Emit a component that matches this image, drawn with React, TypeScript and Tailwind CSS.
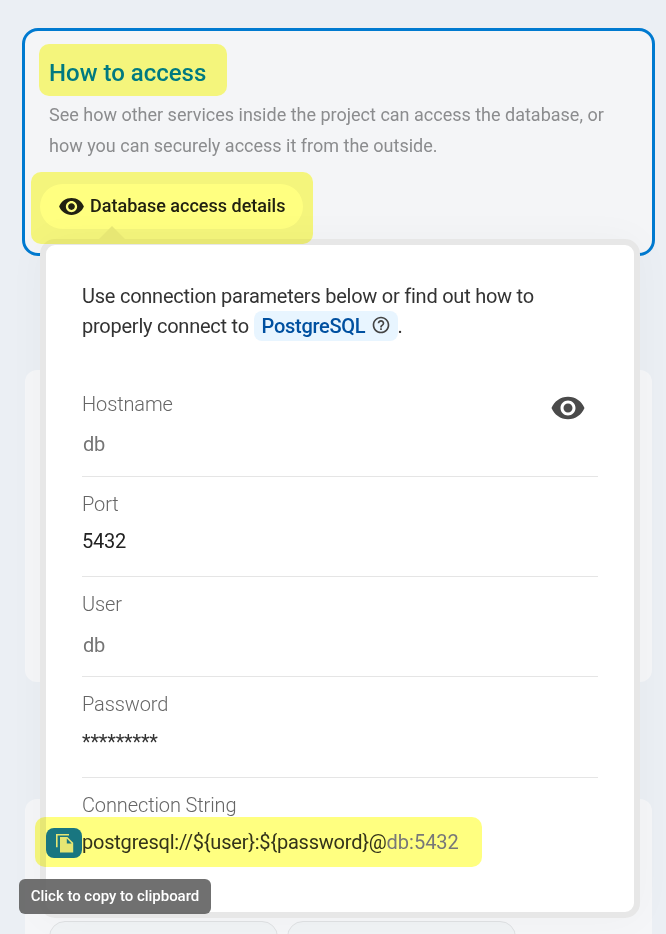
import type { ReactNode } from 'react';
import { MdVisibility, MdHelpOutline } from 'react-icons/md';

type FieldProps = {
  label: string;
  value: ReactNode;
  className: string;
  valueClass: string;
};

function Field({ label, value, className, valueClass }: FieldProps) {
  return (
    <div className={`box-border flex flex-col whitespace-nowrap border-b border-[#e5e5e5] ${className}`}>
      <div className="h-[30px] text-[20px] leading-[30px] tracking-[-0.12px] font-light text-[#666]">{label}</div>
      <div className={`h-[30px] text-[20px] leading-[30px] ${valueClass}`}>{value}</div>
    </div>
  );
}

function CopyIcon() {
  return (
    <svg viewBox="0 0 18 19" className="h-[19px] w-[18px]" fill="#e6e6e6">
      <path d="M0 13.3V0h13v1.6H1.6v11.7z" />
      <path fillRule="evenodd" d="M4 3h7.4L17.2 8.8v9.8H4zM10.8 4.4v5h4.9z" />
    </svg>
  );
}

function AccessCard() {
  return (
    <section className="h-[228px] w-[633px] rounded-[16px] border-[3px] border-[#007ad0] bg-[#f4f5f7] pl-6 pt-[26px]">
      <h2 className="h-[32px] whitespace-nowrap text-[24px] font-medium leading-[32px] text-[#007aff]">How to access</h2>
      <p className="mt-[10px] whitespace-nowrap text-[18px] leading-[31px] text-[#8b8c8e]">
        See how other services inside the project can access the database, or
        <br />
        how you can securely access it from the outside.
      </p>
      <button className="-ml-[9px] mt-[23px] flex h-[45px] w-[263px] items-center gap-[5px] rounded-full bg-white pl-[18px] text-[18px] font-medium text-[#212121]">
        <MdVisibility className="size-[27px] shrink-0" />
        <span className="whitespace-nowrap pb-[2px]">Database access details</span>
      </button>
    </section>
  );
}

function ConnectionPopup() {
  return (
    <div className="absolute left-[40px] top-[239px] h-[679px] w-[600px] rounded-[15px] border-[6px] border-[#e7e7e7] bg-white px-9 pt-9 shadow-[0_0_40px_rgba(0,0,0,0.03)]">
      <div className="absolute -top-[19px] left-[53px] border-x-[13px] border-b-[13px] border-x-transparent border-b-[#e7e7e7]" />
      <p className="h-[92px] whitespace-nowrap text-[20px] leading-[30px] tracking-[-0.24px] text-[#333]">
        Use connection parameters below or find out how to
        <br />
        properly connect to{' '}
        <span className="inline-flex h-[30px] w-[144px] items-center gap-[6px] rounded-lg bg-[#e8f5ff] pl-2 align-top font-medium tracking-[-0.28px] text-[#0050a0]">
          PostgreSQL
          <MdHelpOutline className="mb-[2px] size-[20px] text-[#444]" />
        </span>
        .
      </p>
      <div className="relative mt-[16px]">
        <MdVisibility className="absolute right-[12px] top-px size-[36px] text-[#4a4a4a]" />
        <Field label="Hostname" value="db" className="h-[88px] gap-[10px]" valueClass="pl-px tracking-[-0.3px] text-[#757575]" />
        <Field label="Port" value="5432" className="h-[100px] gap-[7px] pt-3" valueClass="tracking-[-0.2px] text-[#222]" />
        <Field label="User" value="db" className="h-[100px] gap-[11px] pt-3" valueClass="pl-px tracking-[-0.3px] text-[#757575]" />
        <Field label="Password" value="*********" className="h-[101px] gap-[8px] pt-3" valueClass="tracking-[-0.2px] text-[#333]" />
        <Field
          label="Connection String"
          value={
            <div className="-ml-9 flex h-[30px] items-center">
              <span className="flex h-[30px] w-9 items-center justify-center rounded-lg bg-[#1976ff] pl-[2px]">
                <CopyIcon />
              </span>
              <span className="pb-[2px] tracking-[-0.22px]">
                {'postgresql://${user}:${password}@'}
                <span className="tracking-[0px] text-[#7878f0]">db:5432</span>
              </span>
            </div>
          }
          className="h-[90px] gap-[8px] border-b-0 pt-3"
          valueClass="text-[#333]"
        />
      </div>
    </div>
  );
}

export default function App() {
  return (
    <main className="relative isolate h-[934px] w-[666px] overflow-hidden bg-[#ebeff4] font-['Roboto',sans-serif]">
      <div className="flex flex-col pl-[22px] pt-[28px]">
        <AccessCard />
        <section className="ml-[3px] mt-[114px] h-[312px] w-[627px] rounded-[12px] bg-[#f5f6f8]" />
        <section className="ml-[3px] mt-[117px] flex h-[200px] w-[627px] gap-[9px] rounded-[12px] bg-[#f5f6f8] pl-6 pt-[122px]">
          <div className="h-[45px] w-[229px] rounded-2xl border border-[#dfe1e3] bg-[#f0f3f5]" />
          <div className="h-[45px] w-[229px] rounded-2xl border border-[#dfe1e3] bg-[#f0f3f5]" />
        </section>
      </div>
      <ConnectionPopup />
      {/* Yellow marker strokes tint whatever lies below them */}
      <div className="absolute left-[39px] top-[44px] h-[52px] w-[188px] rounded-[10px] bg-[#ffff80] mix-blend-multiply" />
      <div className="absolute left-[31px] top-[172px] h-[72px] w-[282px] rounded-[10px] bg-[#ffff80] mix-blend-multiply" />
      <div className="absolute left-[35px] top-[817px] h-[50px] w-[447px] rounded-[10px] bg-[#ffff80] mix-blend-multiply" />
      <div className="absolute left-[19px] top-[879px] flex h-[35px] w-[192px] items-center justify-center whitespace-nowrap rounded-[6px] bg-[#616161]/90 text-[15px] font-medium tracking-[-0.03px] text-white">
        Click to copy to clipboard
      </div>
    </main>
  );
}
